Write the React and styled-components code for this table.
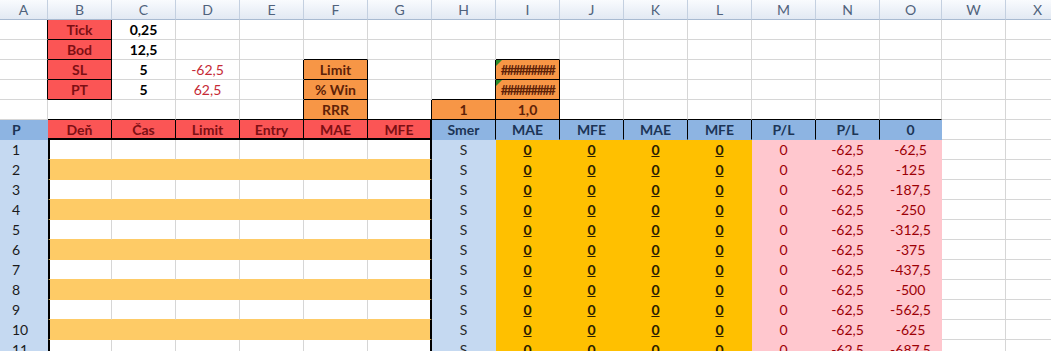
import React from 'react';
import styled, { createGlobalStyle, css } from 'styled-components';

const GRID = '#d6d6d6';
const RED = '#fb5555';
const RED_TXT = '#7d0f14';
const ORANGE = '#f79646';
const ORANGE_TXT = '#5e2208';
const BLUE = '#8db4e2';
const NAVY = '#1c3556';
const LIGHTBLUE = '#c5d9f1';
const YELLOW = '#fecb66';
const GOLD = '#ffc000';
const PINK = '#ffc7ce';
const PINK_TXT = '#9c0006';
const DARK = '#000';

const GlobalStyle = createGlobalStyle`
  html, body {
    margin: 0;
    padding: 0;
    background: #fff;
  }
  body {
    font-family: Lato, "Liberation Sans", sans-serif;
    font-size: 14px;
  }
`;

const Sheet = styled.div`
  width: 1051px;
  height: 351px;
  overflow: hidden;
  display: flex;
  flex-direction: column;
`;

const Row = styled.div`
  display: grid;
  grid-template-columns: 48px repeat(13, 64px) 62px 64px 64px;
  grid-auto-rows: 20px;
  flex: none;
`;

const ColLetter = styled.div`
  box-sizing: border-box;
  display: flex;
  align-items: center;
  justify-content: center;
  background: linear-gradient(#f9fbfe, #e2e9f3);
  border-right: 1px solid #c4d0e0;
  border-bottom: 1px solid #a8bad1;
  color: #50627c;
  font-size: 14px;
`;

const Cell = styled.div`
  position: relative;
  box-sizing: border-box;
  display: flex;
  align-items: center;
  justify-content: ${(p) => (p.$left ? 'flex-start' : 'center')};
  padding-left: ${(p) => (p.$left ? '12px' : '0')};
  background: ${(p) => p.$bg || '#fff'};
  color: ${(p) => p.$fg || '#000'};
  font-weight: ${(p) => (p.$bold ? 700 : 400)};
  text-decoration: ${(p) => (p.$u ? 'underline' : 'none')};
  font-size: ${(p) => (p.$tight ? '13px' : '14px')};
  letter-spacing: ${(p) => (p.$tight ? '-1.6px' : 'normal')};
  border-right: ${(p) => p.$rw || 1}px solid ${(p) => p.$r || p.$bg || GRID};
  border-bottom: ${(p) => p.$bw || 1}px solid ${(p) => p.$b || p.$bg || GRID};
  border-left: ${(p) => (p.$l ? `${p.$lw || 1}px solid ${p.$l}` : 'none')};
  white-space: nowrap;
  overflow: hidden;

  ${(p) =>
    p.$flag &&
    css`
      &::before {
        content: '';
        position: absolute;
        left: 0;
        top: 0;
        border-top: 6px solid #2c8a2c;
        border-right: 6px solid transparent;
      }
    `}
`;

const LETTERS = ['A', 'B', 'C', 'D', 'E', 'F', 'G', 'H', 'I', 'J', 'K', 'L', 'M', 'N', 'O', 'W', 'X'];

const blank = () => LETTERS.map(() => ({}));
const fmt = (n) => String(n).replace('.', ',');

// horní blok s parametry (Tick .. RRR)
const top = [0, 1, 2, 3, 4].map(() => blank());
['Tick', 'Bod', 'SL', 'PT'].forEach((t, i) => {
  top[i][0].r = DARK;
  top[i][1] = { text: t, bg: RED, fg: RED_TXT, bold: true, r: DARK, b: DARK };
  top[i][2] = { text: ['0,25', '12,5', '5', '5'][i], bold: true };
});
top[2][3] = { text: '-62,5', fg: '#c62a36' };
top[3][3] = { text: '62,5', fg: '#c62a36' };

const orange = (text, extra = {}) => ({
  text,
  bg: ORANGE,
  fg: ORANGE_TXT,
  bold: true,
  r: DARK,
  b: DARK,
  ...extra,
});
top[2][5] = orange('Limit');
top[3][5] = orange('% Win');
top[4][5] = orange('RRR');
top[1][5].b = DARK;
[2, 3, 4].forEach((i) => (top[i][4].r = DARK));

top[2][8] = orange('#########', { flag: true, tight: true });
top[3][8] = orange('#########', { flag: true, tight: true });
top[4][8] = orange('1,0');
top[1][8].b = DARK;
top[2][7].r = DARK;
top[3][7].r = DARK;
top[3][7].b = DARK;
top[4][7] = orange('1');
top[4][6].r = DARK;
for (let c = 1; c <= 14; c++) top[4][c].b = DARK;

// hlavička tabulky
const head = blank();
head[0] = { text: 'P', bg: BLUE, fg: NAVY, bold: true, left: true };
['Deň', 'Čas', 'Limit', 'Entry', 'MAE', 'MFE'].forEach((t, i) => {
  head[i + 1] = { text: t, bg: RED, fg: RED_TXT, bold: true, r: DARK, b: DARK, bw: 2 };
});
head[6].rw = 2;
['Smer', 'MAE', 'MFE', 'MAE', 'MFE', 'P/L', 'P/L', '0'].forEach((t, i) => {
  head[i + 7] = { text: t, bg: BLUE, fg: NAVY, bold: true, r: DARK };
});
head[14].r = BLUE;

// řádky obchodů
const body = Array.from({ length: 11 }, (_, i) => {
  const row = blank();
  const stripe = i % 2 === 1;
  row[0] = { text: String(i + 1), bg: LIGHTBLUE, fg: '#1b1b1b', left: true };
  for (let c = 1; c <= 6; c++) {
    row[c] = stripe ? { bg: YELLOW } : { b: YELLOW };
  }
  row[1].l = DARK;
  row[1].lw = 2;
  row[6].r = DARK;
  row[6].rw = 2;
  row[7] = { text: 'S', bg: LIGHTBLUE, fg: '#2a2a2a' };
  for (let c = 8; c <= 11; c++) {
    row[c] = { text: '0', bg: GOLD, fg: '#2b2000', bold: true, u: true };
  }
  row[12] = { text: '0', bg: PINK, fg: PINK_TXT };
  row[13] = { text: '-62,5', bg: PINK, fg: PINK_TXT };
  row[14] = { text: fmt(-62.5 * (i + 1)), bg: PINK, fg: PINK_TXT };
  return row;
});

const renderRow = (cells, key) => (
  <Row key={key}>
    {cells.map((c, j) => (
      <Cell
        key={j}
        $bg={c.bg}
        $fg={c.fg}
        $bold={c.bold}
        $u={c.u}
        $left={c.left}
        $tight={c.tight}
        $flag={c.flag}
        $r={c.r}
        $rw={c.rw}
        $b={c.b}
        $bw={c.bw}
        $l={c.l}
        $lw={c.lw}
      >
        {c.text}
      </Cell>
    ))}
  </Row>
);

const App = () => (
  <>
    <GlobalStyle />
    <Sheet>
      <Row>
        {LETTERS.map((l) => (
          <ColLetter key={l}>{l}</ColLetter>
        ))}
      </Row>
      {top.map((r, i) => renderRow(r, `t${i}`))}
      {renderRow(head, 'head')}
      {body.map((r, i) => renderRow(r, `b${i}`))}
    </Sheet>
  </>
);

export default App;
